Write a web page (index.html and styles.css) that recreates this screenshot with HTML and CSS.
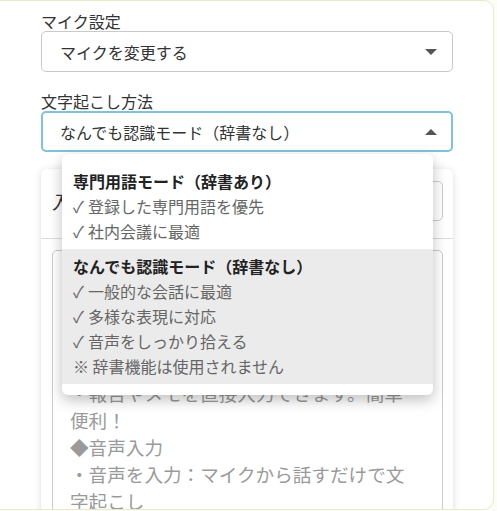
FILE: index.html
```html
<!DOCTYPE html>
<html lang="ja">
<head>
<meta charset="utf-8">
<title>設定</title>
<link rel="stylesheet" href="styles.css">
</head>
<body>
<div class="frame">
  <div class="field">
    <div class="label">マイク設定</div>
    <div class="select"><span>マイクを変更する</span><i class="caret down"></i></div>
  </div>
  <div class="field field-2">
    <div class="label">文字起こし方法</div>
    <div class="select-wrap">
      <div class="select open"><span>なんでも認識モード（辞書なし）</span><i class="caret up"></i></div>
      <ul class="menu">
        <li class="opt">
          <div class="opt-title">専門用語モード（辞書あり）</div>
          <div class="opt-line"><span class="check">✓</span>登録した専門用語を優先</div>
          <div class="opt-line"><span class="check">✓</span>社内会議に最適</div>
        </li>
        <li class="opt selected">
          <div class="opt-title">なんでも認識モード（辞書なし）</div>
          <div class="opt-line"><span class="check">✓</span>一般的な会話に最適</div>
          <div class="opt-line"><span class="check">✓</span>多様な表現に対応</div>
          <div class="opt-line"><span class="check">✓</span>音声をしっかり拾える</div>
          <div class="opt-line">※ 辞書機能は使用されません</div>
        </li>
      </ul>
    </div>
  </div>
  <div class="card">
    <div class="card-row">
      <span class="card-label">入力内容</span>
      <div class="input"></div>
    </div>
    <div class="card-body">
      <div class="textarea">◆使い方ガイド
・マイクを選択して録音を開始
・文字起こし方法を選べます
◆テキスト入力
・報告やメモを直接入力できます。簡単便利！
◆音声入力
・音声を入力：マイクから話すだけで文字起こし</div>
    </div>
  </div>
</div>
</body>
</html>
```
FILE: styles.css
```css
* { box-sizing: border-box; }
html, body { margin: 0; padding: 0; }
body {
  background: #fcfdf6;
  font-family: "Noto Sans CJK JP", "Noto Sans", sans-serif;
  color: #333;
  overflow: hidden;
}
.frame {
  margin-left: -10px;
  width: 504px;
  height: 510px;
  background: #fff;
  border: 1px solid #e6ebcb;
  border-radius: 10px;
  padding: 10px 40px 0 50px;
  overflow: hidden;
}
.label {
  font-size: 16px;
  line-height: 20px;
  color: #333;
}
.field-2 { margin-top: 19px; }
.select-wrap { position: relative; }
.select {
  height: 41px;
  border: 1px solid #c9c9c9;
  border-radius: 5px;
  display: flex;
  align-items: center;
  justify-content: space-between;
  padding: 0 15px 0 18px;
  font-size: 16px;
  color: #333;
}
.select.open {
  border: 2px solid #7ec3db;
  padding: 0 14px 0 17px;
}
.caret {
  width: 0;
  height: 0;
  border-left: 6.5px solid transparent;
  border-right: 6.5px solid transparent;
}
.caret.down { border-top: 6px solid #555; }
.caret.up { border-bottom: 6px solid #555; }
.menu {
  position: absolute;
  top: calc(100% + 2px);
  left: 21px;
  right: 20px;
  margin: 0;
  padding: 10px 0 11px;
  list-style: none;
  background: #fff;
  border-radius: 6px;
  box-shadow: 0 5px 14px rgba(0, 0, 0, 0.25);
  z-index: 2;
}
.opt {
  padding: 5px 11px;
  font-size: 16px;
  line-height: 25px;
}
.opt.selected { background: #ebebeb; }
.opt-title { font-weight: 700; color: #222; }
.opt-line { color: #666; }
.check {
  display: inline-block;
  width: 15px;
}
.card {
  margin-top: 17px;
  background: #fff;
  border-radius: 6px;
  box-shadow: 0 1px 7px rgba(0, 0, 0, 0.14);
  height: 400px;
}
.card-row {
  display: flex;
  align-items: center;
  gap: 14px;
  padding: 12px 10px 17px 11px;
  border-bottom: 1px solid #dcdcdc;
}
.card-label {
  font-size: 18px;
  color: #333;
  white-space: nowrap;
}
.input {
  flex: 1;
  height: 40px;
  border: 1px solid #ccc;
  border-radius: 5px;
}
.card-body { padding: 11px 10px 0 11px; }
.textarea {
  border: 1px solid #ccc;
  border-radius: 5px;
  padding: 20px 24px 20px 17px;
  font-size: 18.6px;
  line-height: 27px;
  color: #9a9a9a;
  white-space: pre-wrap;
  height: 320px;
}
```
